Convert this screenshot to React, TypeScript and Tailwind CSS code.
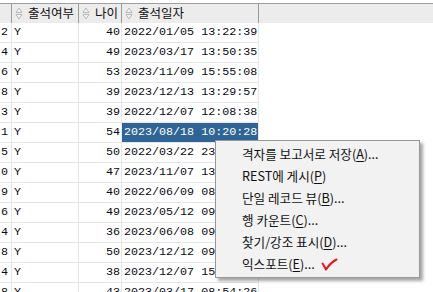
import React from "react";

/* data grid with a right-click context menu open over the 출석일자 column */

const MONO = { fontFamily: '"Liberation Mono", "Courier New", monospace' };
const KR = { fontFamily: '"Noto Sans CJK KR", "Noto Sans", sans-serif' };

const rows: [string, string, string, string][] = [
  ["2", "Y", "40", "2022/01/05 13:22:39"],
  ["4", "Y", "49", "2023/03/17 13:50:35"],
  ["6", "Y", "53", "2023/11/09 15:55:08"],
  ["8", "Y", "39", "2023/12/13 13:29:57"],
  ["3", "Y", "39", "2022/12/07 12:08:38"],
  ["1", "Y", "54", "2023/08/18 10:20:28"],
  ["5", "Y", "50", "2022/03/22 23:41:12"],
  ["0", "Y", "47", "2023/11/07 13:05:44"],
  ["9", "Y", "40", "2022/06/09 08:17:03"],
  ["6", "Y", "49", "2023/05/12 09:33:51"],
  ["4", "Y", "36", "2023/06/08 09:12:19"],
  ["8", "Y", "50", "2023/12/12 09:48:06"],
  ["4", "Y", "38", "2023/12/07 15:26:40"],
  ["8", "Y", "43", "2023/03/17 08:54:26"],
];

const SELECTED = 5;

function SortIcon() {
  return (
    <svg width="8" height="13" viewBox="0 0 8 13" className="shrink-0">
      <path d="M1 5.5 L4 1 L7 5.5 Z" fill="#f4f4f4" stroke="#b8b8b8" strokeWidth="1" />
      <path d="M1 7.5 L4 12 L7 7.5 Z" fill="#f4f4f4" stroke="#b8b8b8" strokeWidth="1" />
    </svg>
  );
}

function HeaderCell({ label, w }: { label: string; w: string }) {
  return (
    <div className={`${w} flex shrink-0 items-center gap-[5px] border-r border-[#9c9c9c] pl-[3px]`}>
      <SortIcon />
      <span className="text-[12.5px] leading-none text-[#111]" style={KR}>{label}</span>
    </div>
  );
}

const menu: { pre: string; key: string; post: string }[] = [
  { pre: "격자를 보고서로 저장(", key: "A", post: ")..." },
  { pre: "REST에 게시(", key: "P", post: ")" },
  { pre: "단일 레코드 뷰(", key: "B", post: ")..." },
  { pre: "행 카운트(", key: "C", post: ")..." },
  { pre: "찾기/강조 표시(", key: "D", post: ")..." },
  { pre: "익스포트(", key: "E", post: ")..." },
];

export default function App() {
  return (
    <div className="relative h-[292px] w-[433px] overflow-hidden bg-white">
      <div className="h-[3px]" />

      {/* header */}
      <div className="flex h-[20px] border-t border-[#a0a0a0] bg-[#ececec]">
        <div className="w-[12px] shrink-0 border-r border-[#9c9c9c]" />
        <HeaderCell label="출석여부" w="w-[67px]" />
        <HeaderCell label="나이" w="w-[43px]" />
        <HeaderCell label="출석일자" w="w-[137px]" />
        <div className="flex-1" />
      </div>

      {/* body */}
      <div className="text-[11.7px] leading-none text-[#0a0a14]" style={MONO}>
        {rows.map((r, i) => (
          <div key={i} className="flex h-[20px]">
            <div className="flex w-[12px] shrink-0 items-center justify-end border-r border-b border-[#e6e6e6] pr-[3px]">{r[0]}</div>
            <div className="flex w-[67px] shrink-0 items-center border-r border-b border-[#e6e6e6] pl-[2px]">{r[1]}</div>
            <div className="flex w-[43px] shrink-0 items-center justify-end border-r border-b border-[#e6e6e6] pr-[1px]">{r[2]}</div>
            <div className="flex w-[137px] shrink-0 border-r border-b border-[#e6e6e6]">
              <div
                className={`flex flex-1 items-center pl-[2px] ${i === SELECTED ? "bg-[#2f6496] text-white" : ""}`}
              >
                {r[3]}
              </div>
            </div>
          </div>
        ))}
      </div>

      {/* context menu */}
      <div
        className="absolute left-[215px] top-[140px] w-[205px] border border-[#979797] bg-[#f2f2f2] py-[2px] shadow-[3px_3px_3px_rgba(0,0,0,0.35)]"
        style={KR}
      >
        {menu.map((m, i) => (
          <div key={i} className="flex h-[22px] items-center pl-[26px] text-[12.6px] leading-none text-[#111]">
            <span>
              {m.pre}
              <span className="underline underline-offset-2">{m.key}</span>
              {m.post}
            </span>
            {i === menu.length - 1 && (
              <svg width="17" height="13" viewBox="0 0 17 13" className="ml-[6px]">
                <path d="M1.5 5.5 C3 7.5 4 9.5 5 11.5 C8 7 11.5 3.5 15.5 1.5" fill="none" stroke="#e8141b" strokeWidth="2" strokeLinecap="round" strokeLinejoin="round" />
              </svg>
            )}
          </div>
        ))}
      </div>
    </div>
  );
}
